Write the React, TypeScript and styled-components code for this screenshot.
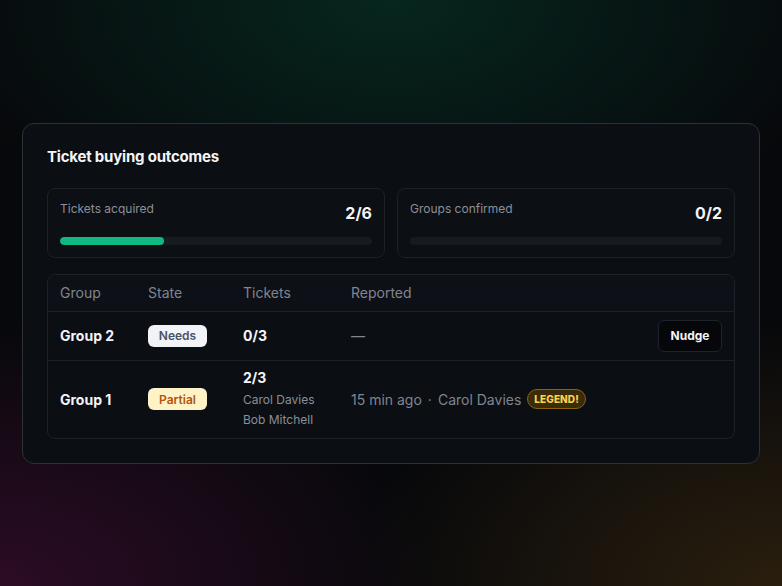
import React from "react";
import styled, { createGlobalStyle } from "styled-components";

const Global = createGlobalStyle`
  html, body { margin: 0; padding: 0; }
  body {
    font-family: Inter, "Noto Sans", sans-serif;
    background: #07080b;
    -webkit-font-smoothing: antialiased;
  }
`;

const Page = styled.div`
  width: 782px;
  height: 586px;
  box-sizing: border-box;
  display: flex;
  align-items: center;
  justify-content: center;
  background:
    radial-gradient(ellipse 60% 45% at 50% 0%, rgba(6, 40, 31, 0.95), rgba(6, 40, 31, 0) 100%),
    radial-gradient(ellipse 55% 45% at 0% 100%, rgba(46, 12, 38, 0.95), rgba(46, 12, 38, 0) 100%),
    radial-gradient(ellipse 55% 45% at 100% 100%, rgba(44, 32, 14, 0.95), rgba(44, 32, 14, 0) 100%),
    #07080b;
`;

const Card = styled.section`
  width: 738px;
  box-sizing: border-box;
  padding: 24px 24px 24px;
  border: 1px solid #2c3037;
  border-radius: 12px;
  background: #0b0e13;
  display: flex;
  flex-direction: column;
`;

const Title = styled.h2`
  margin: 0;
  font-size: 15px;
  font-weight: 700;
  color: #f3f4f6;
  line-height: 18px;
  letter-spacing: -0.2px;
`;

const Stats = styled.div`
  margin-top: 22px;
  display: grid;
  grid-template-columns: 1fr 1fr;
  gap: 12px;
`;

const StatBox = styled.div`
  box-sizing: border-box;
  height: 70px;
  border: 1px solid #1d2128;
  border-radius: 8px;
  background: #0c0f14;
  padding: 12px 12px 0;
  display: flex;
  flex-direction: column;
`;

const StatTop = styled.div`
  display: flex;
  justify-content: space-between;
  align-items: flex-start;
`;

const StatLabel = styled.span`
  font-size: 12px;
  color: #8a8f99;
  line-height: 16px;
`;

const StatValue = styled.span`
  font-size: 16px;
  font-weight: 700;
  color: #f3f4f6;
  line-height: 20px;
  margin-top: 2px;
`;

const Track = styled.div`
  margin-top: 14px;
  height: 8px;
  border-radius: 4px;
  background: #161a21;
  overflow: hidden;
`;

const Fill = styled.div`
  height: 100%;
  border-radius: 4px;
  background: #10b981;
`;

const Table = styled.div`
  margin-top: 16px;
  border: 1px solid #1d2128;
  border-radius: 8px;
  overflow: hidden;
  background: #0b0e13;
`;

const Row = styled.div<{ $h: number; $head?: boolean; $last?: boolean }>`
  display: grid;
  grid-template-columns: 88px 95px 108px 1fr auto;
  align-items: center;
  height: ${(p) => p.$h}px;
  box-sizing: border-box;
  padding: 0 12px;
  background: ${(p) => (p.$head ? "#0d1016" : "transparent")};
  border-bottom: ${(p) => (p.$last ? "none" : "1px solid #1d2128")};
`;

const HeadCell = styled.span`
  font-size: 14px;
  color: #80858f;
`;

const GroupName = styled.span`
  font-size: 14px;
  font-weight: 700;
  color: #f3f4f6;
`;

const Badge = styled.span<{ $bg: string; $fg: string }>`
  display: inline-flex;
  justify-content: center;
  align-items: center;
  width: 59px;
  height: 22px;
  box-sizing: border-box;
  border-radius: 6px;
  background: ${(p) => p.$bg};
  color: ${(p) => p.$fg};
  font-size: 12px;
  font-weight: 600;
`;

const TicketsCell = styled.div`
  display: flex;
  flex-direction: column;
`;

const TicketCount = styled.span`
  font-size: 14px;
  font-weight: 700;
  color: #f3f4f6;
  line-height: 20px;
`;

const BuyerList = styled.div`
  display: flex;
  flex-direction: column;
  margin-top: 2px;
`;

const Buyer = styled.span`
  font-size: 12px;
  color: #8a8f99;
  line-height: 20px;
`;

const Reported = styled.div`
  display: flex;
  align-items: center;
  font-size: 14px;
  color: #80858f;
  gap: 6px;
`;

const Legend = styled.span`
  display: inline-flex;
  align-items: center;
  height: 20px;
  box-sizing: border-box;
  padding: 0 6px;
  border-radius: 10px;
  border: 1px solid #8a6212;
  background: #3a2b09;
  color: #fcd34d;
  font-size: 10px;
  font-weight: 800;
  letter-spacing: 0.1px;
`;

const NudgeButton = styled.button`
  height: 32px;
  width: 64px;
  border-radius: 6px;
  border: 1px solid #1f232a;
  background: #06070a;
  color: #f3f4f6;
  font-family: Inter, "Noto Sans", sans-serif;
  font-size: 12px;
  font-weight: 700;
  cursor: pointer;
`;

export default function App() {
  const stats = [
    { label: "Tickets acquired", value: "2/6", pct: 2 / 6 },
    { label: "Groups confirmed", value: "0/2", pct: 0 },
  ];
  return (
    <Page>
      <Global />
      <Card>
        <Title>Ticket buying outcomes</Title>
        <Stats>
          {stats.map((s) => (
            <StatBox key={s.label}>
              <StatTop>
                <StatLabel>{s.label}</StatLabel>
                <StatValue>{s.value}</StatValue>
              </StatTop>
              <Track>
                <Fill style={{ width: `${s.pct * 100}%` }} />
              </Track>
            </StatBox>
          ))}
        </Stats>
        <Table>
          <Row $h={37} $head>
            <HeadCell>Group</HeadCell>
            <HeadCell>State</HeadCell>
            <HeadCell>Tickets</HeadCell>
            <HeadCell>Reported</HeadCell>
            <span />
          </Row>
          <Row $h={49}>
            <GroupName>Group 2</GroupName>
            <span>
              <Badge $bg="#f1f3f6" $fg="#475467">Needs</Badge>
            </span>
            <TicketCount>0/3</TicketCount>
            <Reported>—</Reported>
            <NudgeButton>Nudge</NudgeButton>
          </Row>
          <Row $h={77} $last>
            <GroupName>Group 1</GroupName>
            <span>
              <Badge $bg="#fef3c7" $fg="#b45309">Partial</Badge>
            </span>
            <TicketsCell>
              <TicketCount>2/3</TicketCount>
              <BuyerList>
                <Buyer>Carol Davies</Buyer>
                <Buyer>Bob Mitchell</Buyer>
              </BuyerList>
            </TicketsCell>
            <Reported>
              <span>15 min ago</span>
              <span>·</span>
              <span>Carol Davies</span>
              <Legend>LEGEND!</Legend>
            </Reported>
            <span />
          </Row>
        </Table>
      </Card>
    </Page>
  );
}
